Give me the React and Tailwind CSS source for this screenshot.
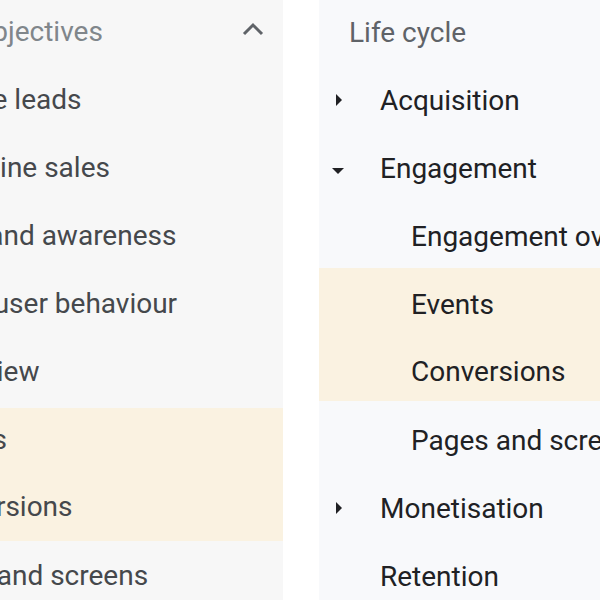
import React from 'react';

const LEFT = [
  { label: 'Business objectives', kind: 'head', off: 'ml-[-144px]' },
  { label: 'Generate leads', kind: 'top', off: 'ml-[-105px]' },
  { label: 'Drive online sales', kind: 'top', off: 'ml-[-108px]' },
  { label: 'Raise brand awareness', kind: 'top', off: 'ml-[-112px]' },
  { label: 'Examine user behaviour', kind: 'top', off: 'ml-[-120px]' },
  { label: 'Overview', kind: 'sub', off: 'ml-[-74px]' },
  { label: 'Events', kind: 'sub', hl: true, off: 'ml-[-76px]' },
  { label: 'Conversions', kind: 'sub', hl: true, off: 'ml-[-82px]' },
  { label: 'Pages and screens', kind: 'sub', off: 'ml-[-88px]' },
];

const RIGHT = [
  { label: 'Life cycle', kind: 'head' },
  { label: 'Acquisition', kind: 'top', caret: 'right' },
  { label: 'Engagement', kind: 'top', caret: 'down' },
  { label: 'Engagement overview', kind: 'sub' },
  { label: 'Events', kind: 'sub', hl: true },
  { label: 'Conversions', kind: 'sub', hl: true },
  { label: 'Pages and screens', kind: 'sub' },
  { label: 'Monetisation', kind: 'top', caret: 'right' },
  { label: 'Retention', kind: 'top' },
];

const font = { fontFamily: 'Roboto, "Noto Sans", sans-serif' };

function Caret({ dir }) {
  if (dir === 'down')
    return (
      <svg width="14" height="8" viewBox="0 0 14 8" className="absolute left-[12px] top-[35px]">
        <path d="M1 1h12L7 7z" fill="#202124" />
      </svg>
    );
  return (
    <svg width="8" height="12" viewBox="0 0 8 12" className="absolute left-[16px] top-[30px]">
      <path d="M1 0l6 6-6 6z" fill="#202124" />
    </svg>
  );
}

function Row({ item, side, h = 'h-[68px]' }) {
  const left = side === 'left';
  const pad = left
    ? item.off
    : { head: 'pl-[30px]', top: 'pl-[61px]', sub: 'pl-[92px]' }[item.kind];
  const color =
    item.kind === 'head'
      ? left ? 'text-[#80868b]' : 'text-[#5f6368]'
      : left ? 'text-[#45484c]' : 'text-[#202124]';
  return (
    <div className={`relative flex items-center ${h} ${left ? 'pb-[4px]' : 'pt-[6px]'}`}>
      {!left && item.caret && <Caret dir={item.caret} />}
      <span className={`whitespace-nowrap text-[28px] leading-none ${pad} ${color}`}>{item.label}</span>
      {left && item.kind === 'head' && (
        <svg width="22" height="14" viewBox="0 0 22 14" className="absolute left-[242px] top-[22px]">
          <path d="M2 12L11 3l9 9" fill="none" stroke="#5f6368" strokeWidth="3" />
        </svg>
      )}
    </div>
  );
}

function Panel({ items, side, className }) {
  const first = items.findIndex(x => x.hl);
  const before = items.slice(0, first);
  const hl = items.filter(x => x.hl);
  const after = items.slice(first + hl.length);
  return (
    <div className={`h-[600px] overflow-hidden ${className}`}>
      <div className={side === 'left' ? 'mt-0' : 'mt-[-4px]'}>
        {before.map(it => <Row key={it.label} item={it} side={side} />)}
        <div className="bg-[#faf2e1] h-[133px] mb-[3px] flex flex-col">
          <Row item={hl[0]} side={side} />
          <Row item={hl[1]} side={side} h="h-[65px]" />
        </div>
        {after.map(it => <Row key={it.label} item={it} side={side} />)}
      </div>
    </div>
  );
}

export default function App() {
  return (
    <div className="flex w-[600px] h-[600px] bg-white overflow-hidden" style={font}>
      <Panel items={LEFT} side="left" className="w-[283px] bg-[#f7f7f7]" />
      <div className="w-[36px]" />
      <Panel items={RIGHT} side="right" className="flex-1 bg-[#f8f9fb]" />
    </div>
  );
}
